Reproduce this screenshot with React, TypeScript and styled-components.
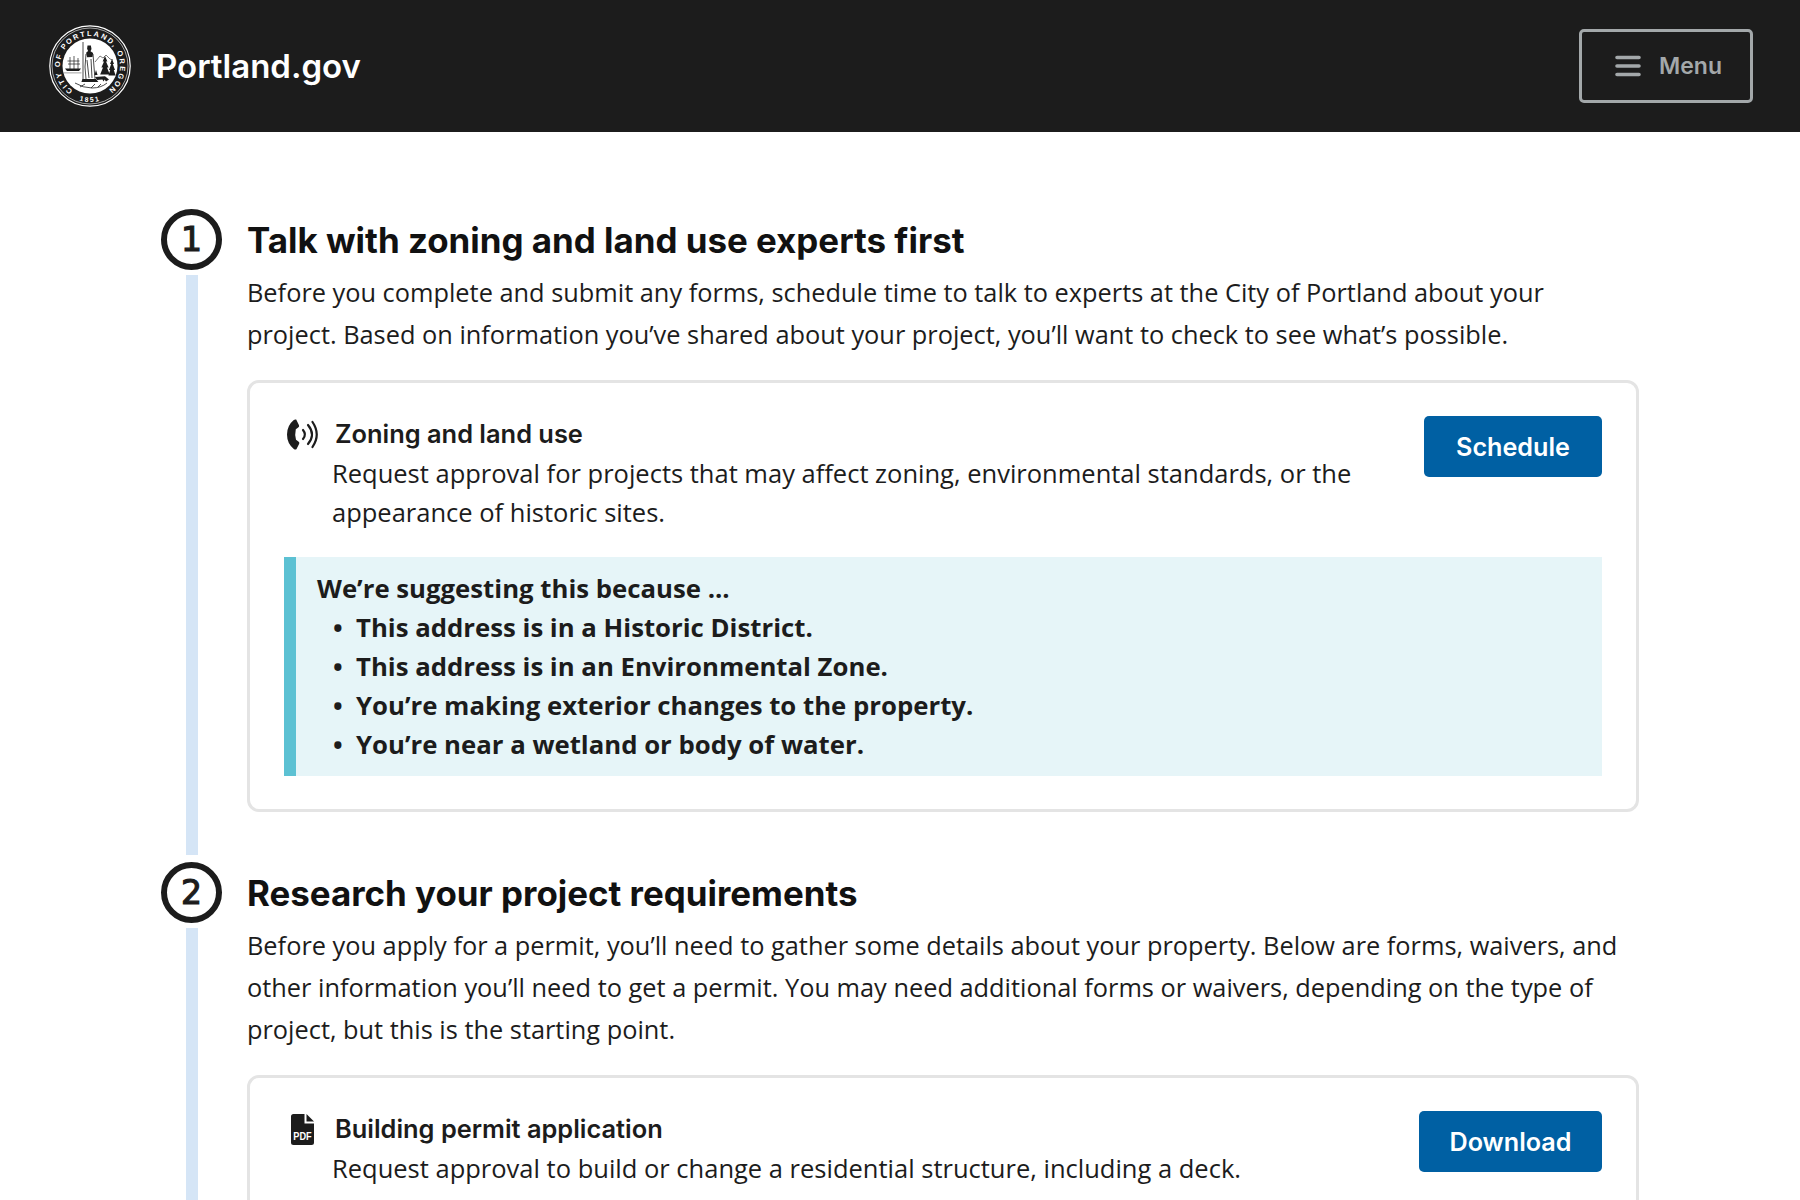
import React from "react";
import styled, { createGlobalStyle } from "styled-components";

const GlobalStyle = createGlobalStyle`
  html, body {
    margin: 0;
    height: 1200px;
    overflow: hidden;
    background: #fff;
  }
  body {
    font-family: "Open Sans", "Noto Sans", Arial, sans-serif;
    color: #1c1c1c;
  }
`;

const Header = styled.header`
  height: 132px;
  background: #1c1c1c;
  display: flex;
  align-items: center;
  justify-content: space-between;
  padding: 0 47px 0 49px;
`;

const Brand = styled.a`
  display: flex;
  align-items: center;
  gap: 25px;
  color: #fff;
  font-family: Inter, Roboto, sans-serif;
  font-weight: 600;
  font-size: 33px;
`;

const MenuButton = styled.button`
  display: flex;
  align-items: center;
  justify-content: center;
  gap: 18px;
  width: 174px;
  height: 74px;
  padding: 0 0 0 5px;
  background: transparent;
  border: 3px solid #a3a8aa;
  border-radius: 5px;
  color: #a3a8aa;
  font-family: Inter, Roboto, sans-serif;
  font-weight: 600;
  font-size: 23px;
`;

const Main = styled.main`
  padding: 77px 161px 0 161px;
`;

const Step = styled.section`
  display: flex;
  gap: 25px;
  padding-bottom: 7px;
`;

const Marker = styled.div`
  flex: 0 0 61px;
  display: flex;
  flex-direction: column;
  align-items: center;
`;

const Circle = styled.div`
  box-sizing: border-box;
  width: 61px;
  height: 61px;
  flex: none;
  border: 6px solid #1c1c1c;
  border-radius: 50%;
  display: flex;
  align-items: center;
  justify-content: center;
  font-family: "DejaVu Sans", sans-serif;
  font-size: 33px;
  -webkit-text-stroke: 1.2px #1c1c1c;
`;

const Line = styled.div`
  flex: 1;
  width: 12px;
  margin-top: 5px;
  background: #d5e5f6;
`;

const Content = styled.div`
  flex: 1;
  min-width: 0;
`;

const StepTitle = styled.h2`
  margin: 0;
  padding-top: 6px;
  font-family: Inter, Roboto, sans-serif;
  font-weight: 700;
  font-size: 34.9px;
  line-height: 50px;
  color: #111;
`;

const Lead = styled.p`
  margin: 6px 0 25px;
  font-size: 25.35px;
  line-height: 42px;
`;

const Card = styled.div`
  border: 3px solid #e4e4e4;
  border-radius: 12px;
  padding: 33px 34px 33px 34px;
  margin-bottom: 43px;
`;

const CardTop = styled.div`
  display: flex;
  justify-content: space-between;
  align-items: flex-start;
  gap: 40px;
`;

const CardTitle = styled.div`
  display: flex;
  align-items: center;
  gap: 14px;
  font-family: Inter, Roboto, sans-serif;
  font-weight: 600;
  font-size: 25.4px;
  line-height: 36px;
`;

const IconSlot = styled.span`
  flex: 0 0 37px;
  display: flex;
  justify-content: center;
`;

const CardText = styled.p`
  margin: 2px 0 0 48px;
  font-size: 25.5px;
  line-height: 39px;
`;

const ActionButton = styled.button<{ $pad: number }>`
  flex: none;
  height: 61px;
  padding: 0 ${(p) => p.$pad}px;
  background: #0060a3;
  border: none;
  border-radius: 5px;
  color: #fff;
  font-family: Inter, Roboto, sans-serif;
  font-weight: 600;
  font-size: 25.2px;
`;

const Callout = styled.div`
  margin-top: 25px;
  background: #e6f5f8;
  border-left: 12px solid #5cc1d3;
  padding: 12px 20px 12px 21px;
  font-size: 25.75px;
  line-height: 39px;
  font-weight: 700;
`;

const ReasonList = styled.ul`
  margin: 0;
  padding: 0 0 0 39px;

  li::marker {
    content: "•  ";
  }
`;

const Seal = () => (
  <svg width="82" height="82" viewBox="0 0 82 82">
    <defs>
      <path id="sealTop" d="M21.7 64 A30 30 0 1 1 60.3 64" />
      <path id="sealBottom" d="M23 72.2 A36 36 0 0 0 59 72.2" />
    </defs>
    <circle cx="41" cy="41" r="40.2" fill="none" stroke="#fff" strokeWidth="1.2" />
    <circle cx="41" cy="41" r="38" fill="none" stroke="#fff" strokeWidth="0.6" />
    <circle cx="41" cy="41" r="27.5" fill="#fff" />
    <text fill="#fff" fontFamily="Liberation Sans" fontSize="7.4" fontWeight="700" letterSpacing="1.75">
      <textPath href="#sealTop" startOffset="50%" textAnchor="middle">CITY OF PORTLAND, OREGON</textPath>
    </text>
    <text fill="#fff" fontFamily="Liberation Sans" fontSize="6.8" fontWeight="700" letterSpacing="1.6">
      <textPath href="#sealBottom" startOffset="50%" textAnchor="middle">1851</textPath>
    </text>
    {/* ship */}
    <g stroke="#1c1c1c" fill="none" strokeWidth="0.7">
      <path d="M21 32v13M25 31v14M29 33v12M18.5 36h12M19 39h12" />
    </g>
    <path fill="#1c1c1c" d="M16 43.5h16l-2 2.6h-12z" />
    <path fill="#8a8a8a" d="M14.5 47.5h18v.8h-18z" />
    {/* figure with trident */}
    <g fill="none" stroke="#1c1c1c" strokeWidth="0.8">
      <path d="M34 17v38" />
      <path d="M37 29l-1 13 1 12M44 29l1 13 1 12" />
      <path d="M38 35l2 18M42 34l1 19" />
    </g>
    <path fill="#1c1c1c" d="M38.5 20.5h3.4l.6 3.4-1 2.4 2.6 1.6-.6 4-5.4.3-1-4.4 2-1.7-1-2.4z" />
    <path fill="#1c1c1c" d="M33.5 54h13.5l2.4 3h-17z" />
    {/* mountain */}
    <path fill="none" stroke="#444" strokeWidth="0.7" d="M46 37l5-6 3 2 3-3 4 4 3 1" />
    {/* trees */}
    <g fill="#1c1c1c">
      <path d="M56 31l2.4 5.5h-1.4l2.6 6h-1.6l2.8 7h-9.6l2.8-7h-1.6l2.6-6h-1.4z" />
      <path d="M63 34l2 5h-1.2l2.2 6h-1.2l1.8 5.5h-7.2l1.8-5.5h-1.2l2.2-6h-1.2z" />
      <path d="M47 45l1.6 5h-3.2z" />
      <path d="M46 52l10-.8 4 3.2-3 2-1.4-2-1 2.2-1.2-2.2-5.4.6z" />
    </g>
    {/* ground */}
    <path fill="none" stroke="#1c1c1c" strokeWidth="0.8" d="M26 58q8 5 17 5t15-5M31 62l5-3M42 63l4-4M49 62l3-3" />
  </svg>
);

const MenuIcon = () => (
  <svg width="26" height="22" viewBox="0 0 26 22">
    <path d="M2 2.5h22M2 11h22M2 19.5h22" stroke="#a3a8aa" strokeWidth="3.6" strokeLinecap="round" />
  </svg>
);

const PhoneIcon = () => (
  <svg width="31" height="31" viewBox="0 0 31 31">
    <path
      fill="#1c1c1c"
      d="M6.5 1.2 Q8 0 9.2.6 L12 6.2 Q12.6 7.6 11.2 8.6 L8.8 10.2 Q7.6 15.5 9 20.8 L11.4 22.4 Q12.8 23.4 12.2 24.8 L9.4 30.2 Q8.2 31 6.8 29.9 Q0 24.5 0 15.5 Q0 6.5 6.5 1.2z"
    />
    <g fill="none" stroke="#1c1c1c" strokeWidth="2.2" strokeLinecap="round">
      <path d="M16 11 q3.8 4.5 0 9" />
      <path d="M21 6 q8 9.5 0 19" />
      <path d="M25.5 3 q8.5 12.5 0 25" />
    </g>
  </svg>
);

const PdfIcon = () => (
  <svg width="23" height="31" viewBox="0 0 23 31">
    <path fill="#1c1c1c" d="M2.5 0 H13.5 V9.5 H23 V28.5 a2.5 2.5 0 0 1 -2.5 2.5 H2.5 a2.5 2.5 0 0 1 -2.5 -2.5 V2.5 a2.5 2.5 0 0 1 2.5 -2.5z" />
    <path fill="#1c1c1c" d="M15.5 0 L23 7.5 H15.5z" />
    <text transform="translate(11.5 25.5) scale(.8 1)" fill="#fff" fontFamily="Liberation Sans" fontWeight="700" fontSize="11.5" textAnchor="middle">PDF</text>
  </svg>
);

export default function App() {
  return (
    <>
      <GlobalStyle />
      <Header>
        <Brand>
          <Seal />
          Portland.gov
        </Brand>
        <MenuButton>
          <MenuIcon />
          Menu
        </MenuButton>
      </Header>
      <Main>
        <Step>
          <Marker>
            <Circle>1</Circle>
            <Line />
          </Marker>
          <Content>
            <StepTitle>Talk with zoning and land use experts first</StepTitle>
            <Lead>
              Before you complete and submit any forms, schedule time to talk to experts at the City of Portland about your
              project. Based on information you’ve shared about your project, you’ll want to check to see what’s possible.
            </Lead>
            <Card>
              <CardTop>
                <div>
                  <CardTitle>
                    <IconSlot><PhoneIcon /></IconSlot>
                    Zoning and land use
                  </CardTitle>
                  <CardText>
                    Request approval for projects that may affect zoning, environmental standards, or the appearance of historic sites.
                  </CardText>
                </div>
                <ActionButton $pad={32}>Schedule</ActionButton>
              </CardTop>
              <Callout>
                We’re suggesting this because ...
                <ReasonList>
                  <li>This address is in a Historic District.</li>
                  <li>This address is in an Environmental Zone.</li>
                  <li>You’re making exterior changes to the property.</li>
                  <li>You’re near a wetland or body of water.</li>
                </ReasonList>
              </Callout>
            </Card>
          </Content>
        </Step>
        <Step>
          <Marker>
            <Circle>2</Circle>
            <Line />
          </Marker>
          <Content>
            <StepTitle>Research your project requirements</StepTitle>
            <Lead>
              Before you apply for a permit, you’ll need to gather some details about your property. Below are forms, waivers, and
              other information you’ll need to get a permit. You may need additional forms or waivers, depending on the type of
              project, but this is the starting point.
            </Lead>
            <Card>
              <CardTop>
                <div>
                  <CardTitle>
                    <IconSlot><PdfIcon /></IconSlot>
                    Building permit application
                  </CardTitle>
                  <CardText>Request approval to build or change a residential structure, including a deck.</CardText>
                </div>
                <ActionButton $pad={30.5}>Download</ActionButton>
              </CardTop>
            </Card>
          </Content>
        </Step>
      </Main>
    </>
  );
}
